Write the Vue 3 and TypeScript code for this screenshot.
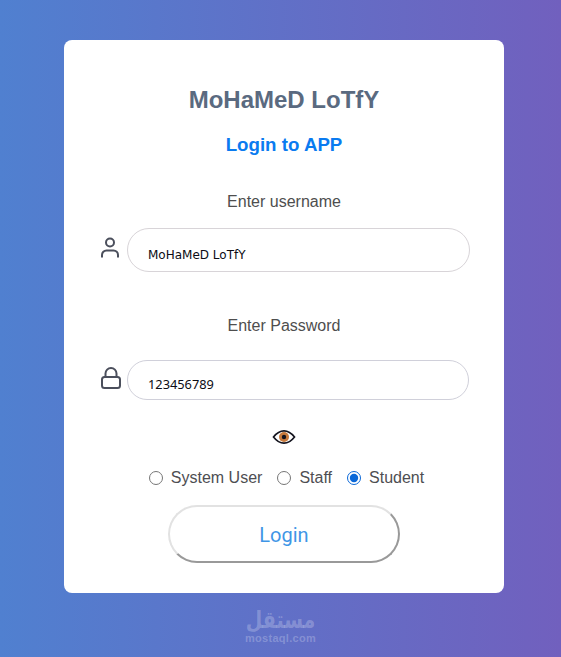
<script setup lang="ts">
import { ref } from 'vue'
const role = ref('student')
const roles = [
  { id: 'system', label: 'System User' },
  { id: 'staff', label: 'Staff' },
  { id: 'student', label: 'Student' },
]
</script>

<template>
  <div class="page">
    <main class="card">
      <h1 class="brand">MoHaMeD LoTfY</h1>
      <h2 class="sub">Login to APP</h2>
      <label class="lbl first">Enter username</label>
      <div class="row user-row">
        <svg class="ico" width="22" height="24" viewBox="0 0 22 24" fill="none" stroke="#4b4f5c" stroke-width="2">
          <circle cx="10" cy="6.500" r="4" />
          <path d="M2 21.500v-2.500a4.500 4.500 0 0 1 4.500-4.500h7a4.500 4.500 0 0 1 4.500 4.500v2.500" />
        </svg>
        <div class="field"><span class="val">MoHaMeD LoTfY</span></div>
      </div>
      <label class="lbl second">Enter Password</label>
      <div class="row pass-row">
        <svg class="ico" width="22" height="24" viewBox="0 0 22 24" fill="none" stroke="#4b4f5c" stroke-width="2">
          <rect x="2" y="11" width="18" height="11" rx="2.500" />
          <path d="M5.500 11V7.500a5.500 5.500 0 0 1 11 0V11" />
        </svg>
        <div class="field pass"><span class="val">123456789</span></div>
      </div>
      <svg class="eye" width="24" height="16" viewBox="0 0 24 16">
        <path d="M1.500 8C5 3.500 8 1.800 12 1.800S19 3.500 22.500 8C19 12.500 16 14.200 12 14.200S5 12.500 1.500 8Z" fill="#fff" stroke="#14141e" stroke-width="1.700" />
        <circle cx="12" cy="8" r="5" fill="#c87a3c" />
        <circle cx="12" cy="8" r="2.200" fill="#14141e" />
      </svg>
      <div class="roles">
        <label v-for="r in roles" :key="r.id" class="role">
          <input v-model="role" class="radio" type="radio" name="role" :value="r.id" />
          <span>{{ r.label }}</span>
        </label>
      </div>
      <button class="btn" type="button">Login</button>
    </main>
    <div class="mark">
      <span class="mark-ar">مستقل</span>
      <span class="mark-en">mostaql.com</span>
    </div>
  </div>
</template>

<style>
html, body { margin: 0; padding: 0; }
</style>

<style scoped>
.page {
  position: relative;
  width: 561px;
  height: 657px;
  overflow: hidden;
  padding-top: 40px;
  box-sizing: border-box;
  background: linear-gradient(90deg, #5080d0, #7160be);
  font-family: "Liberation Sans", Arial, sans-serif;
}
.card {
  width: 440px;
  height: 553px;
  margin-left: 64px;
  box-sizing: border-box;
  padding-top: 46px;
  background: #fff;
  border-radius: 8px;
  display: flex;
  flex-direction: column;
  align-items: center;
}
.brand {
  margin: 0;
  font-size: 24px;
  line-height: 28px;
  font-weight: 700;
  color: #5a6a80;
}
.sub {
  margin: 19px 0 0;
  font-size: 18.72px;
  line-height: 24px;
  font-weight: 700;
  color: #0a7bf0;
}
.lbl {
  font-size: 16px;
  line-height: 20px;
  color: #4e4e4e;
}
.first { margin-top: 35px; }
.second { margin-top: 44px; }
.row {
  display: flex;
  align-items: center;
  align-self: flex-start;
  margin-left: 36px;
  gap: 5px;
}
.user-row { margin-top: 16px; }
.pass-row { margin-top: 24px; }
.ico { flex: none; margin-top: -5px; }
.field {
  width: 343px;
  height: 44px;
  box-sizing: border-box;
  border: 1px solid #d8d4d8;
  border-radius: 22px;
  padding: 18px 0 0 20px;
  font-family: "DejaVu Sans", Tahoma, sans-serif;
  font-size: 12px;
  line-height: 16px;
  color: #0c0c14;
}
.pass {
  width: 342px;
  height: 40px;
  border-radius: 20px;
  border-color: #d0d0da;
  padding-top: 14px;
  font-family: "Noto Sans", Tahoma, sans-serif;
  font-size: 12.8px;
  line-height: 18px;
}
.eye { margin-top: 29px; }
.roles {
  display: flex;
  margin-top: 23px;
  margin-left: 5px;
  gap: 15px;
  height: 20px;
  align-items: center;
  font-size: 16px;
  color: #4e4e52;
}
.role { display: flex; align-items: center; gap: 8px; }
.radio {
  margin: 0;
  width: 14px;
  height: 14px;
  accent-color: #0a68d8;
}
.btn {
  margin-top: 17px;
  width: 232px;
  height: 58px;
  box-sizing: border-box;
  padding-top: 2px;
  background: #fff;
  border: 2px solid;
  border-color: #e2e2e2 #999 #999 #e2e2e2;
  border-radius: 29px;
  font-family: Roboto, Arial, sans-serif;
  font-size: 20px;
  color: #3f96e6;
}
.mark {
  position: absolute;
  left: 0;
  right: 0;
  top: 606px;
  display: flex;
  flex-direction: column;
  align-items: center;
  color: rgba(255, 255, 255, 0.24);
}
.mark-ar {
  font-family: "DejaVu Sans", sans-serif;
  font-size: 19px;
  line-height: 26px;
  font-weight: 700;
  transform: scaleY(1.25);
}
.mark-en {
  font-size: 11px;
  line-height: 12px;
  font-weight: 700;
  letter-spacing: 0.3px;
}
</style>
